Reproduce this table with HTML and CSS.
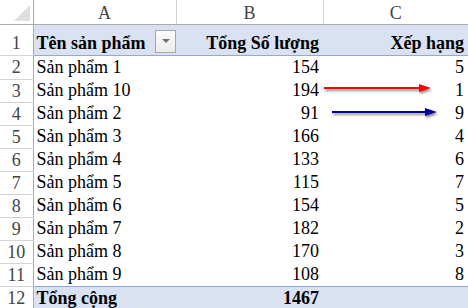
FILE: index.html
```html
<!DOCTYPE html>
<html>
<head>
<meta charset="utf-8">
<link rel="stylesheet" href="styles.css">
</head>
<body>
<div class="sheet">
<table class="grid">
  <colgroup>
    <col class="c-rh"><col class="c-a"><col class="c-b"><col class="c-c">
  </colgroup>
  <thead>
    <tr class="colhead">
      <th class="corner"><span class="tri"></span></th>
      <th>A</th><th>B</th><th class="last">C</th>
    </tr>
  </thead>
  <tbody>
    <tr class="r-head">
      <th class="rh">1</th>
      <td class="bold"><div class="hcell"><span>Tên sản phẩm</span><span class="dd"><span class="ddtri"></span></span></div></td>
      <td class="bold num">Tổng Số lượng</td>
      <td class="bold num">Xếp hạng</td>
    </tr>
    <tr><th class="rh">2</th><td>Sản phẩm 1</td><td class="num">154</td><td class="num">5</td></tr>
    <tr><th class="rh">3</th><td>Sản phẩm 10</td><td class="num">194</td><td class="num">1</td></tr>
    <tr><th class="rh">4</th><td>Sản phẩm 2</td><td class="num">91</td><td class="num">9</td></tr>
    <tr><th class="rh">5</th><td>Sản phẩm 3</td><td class="num">166</td><td class="num">4</td></tr>
    <tr><th class="rh">6</th><td>Sản phẩm 4</td><td class="num">133</td><td class="num">6</td></tr>
    <tr><th class="rh">7</th><td>Sản phẩm 5</td><td class="num">115</td><td class="num">7</td></tr>
    <tr><th class="rh">8</th><td>Sản phẩm 6</td><td class="num">154</td><td class="num">5</td></tr>
    <tr><th class="rh">9</th><td>Sản phẩm 7</td><td class="num">182</td><td class="num">2</td></tr>
    <tr><th class="rh">10</th><td>Sản phẩm 8</td><td class="num">170</td><td class="num">3</td></tr>
    <tr><th class="rh">11</th><td>Sản phẩm 9</td><td class="num">108</td><td class="num">8</td></tr>
    <tr class="r-total"><th class="rh">12</th><td class="bold">Tổng cộng</td><td class="bold num">1467</td><td class="num"></td></tr>
  </tbody>
</table>
<svg class="arrows" width="468" height="308" viewBox="0 0 468 308">
  <defs>
    <filter id="sh" x="-10%" y="-100%" width="120%" height="400%">
      <feGaussianBlur in="SourceAlpha" stdDeviation="0.8"/>
      <feOffset dx="1" dy="2" result="b"/>
      <feComponentTransfer><feFuncA type="linear" slope="0.45"/></feComponentTransfer>
      <feMerge><feMergeNode/><feMergeNode in="SourceGraphic"/></feMerge>
    </filter>
  </defs>
  <g filter="url(#sh)">
    <line x1="324" y1="88" x2="422" y2="88" stroke="#ff0000" stroke-width="2"/>
    <path d="M419 84 L431 88 L419 92 Z" fill="#ff0000"/>
  </g>
  <g filter="url(#sh)">
    <line x1="332" y1="112" x2="428" y2="112" stroke="#000099" stroke-width="2"/>
    <path d="M425 108 L437 112 L425 116 Z" fill="#000099"/>
  </g>
</svg>
</div>
</body>
</html>
```
FILE: styles.css
```css
html, body {
  margin: 0;
  padding: 0;
  background: #ffffff;
}
.sheet {
  position: relative;
  width: 468px;
  height: 308px;
  overflow: hidden;
}
.grid {
  border-collapse: collapse;
  table-layout: fixed;
  width: 468px;
  font-family: "Liberation Serif", "Times New Roman", serif;
  font-size: 18px;
  color: #000;
}
.c-rh { width: 33px; }
.c-a { width: 143px; }
.c-b { width: 147px; }
.c-c { width: 145px; }
.colhead th {
  height: 22px;
  padding: 2px 0 0 0;
  font-weight: normal;
  color: #444;
  text-align: center;
  border-right: 1px solid #d4d4d4;
  border-bottom: 1px solid #ababab;
  line-height: 20px;
  vertical-align: middle;
}
.colhead th.last { border-right: none; }
.colhead th.corner {
  border-right: 1px solid #ababab;
  position: relative;
}
.tri {
  position: absolute;
  right: 3px;
  bottom: 3px;
  width: 0;
  height: 0;
  border-left: 16px solid transparent;
  border-bottom: 16px solid #dfdfdf;
}
th.rh {
  padding: 2px 0 1px 0;
  font-weight: normal;
  color: #444;
  text-align: center;
  line-height: 19px;
  border-right: 1px solid #ababab;
  border-bottom: 1px solid #d4d4d4;
}
tbody tr { height: 23px; }
td {
  padding: 2px 4px 2px 3px;
  white-space: nowrap;
  overflow: hidden;
  line-height: 19px;
  vertical-align: middle;
}
.num { text-align: right; }
.bold { font-weight: bold; }
.r-head { height: 31px; }
.r-head td {
  background: #d9e1f2;
  border-bottom: 1px solid #8ea9db;
  padding-top: 7px;
  padding-bottom: 1px;
}
.r-head th.rh { padding-top: 7px; padding-bottom: 1px; }
.r-head td:first-of-type { padding-right: 0; }
.hcell {
  display: flex;
  align-items: center;
  justify-content: space-between;
}
.dd {
  width: 19px;
  height: 21px;
  border: 1px solid #a6a6a6;
  background: linear-gradient(#fbfbfb, #ececec);
  display: flex;
  align-items: center;
  justify-content: center;
  margin-top: -4px;
}
.ddtri {
  width: 0;
  height: 0;
  border-left: 4px solid transparent;
  border-right: 4px solid transparent;
  border-top: 4px solid #707070;
}
.r-total td {
  background: #d9e1f2;
  border-top: 1px solid #8ea9db;
  padding-top: 2px;
  padding-bottom: 1px;
}
.arrows {
  position: absolute;
  left: 0;
  top: 0;
  pointer-events: none;
}
```
